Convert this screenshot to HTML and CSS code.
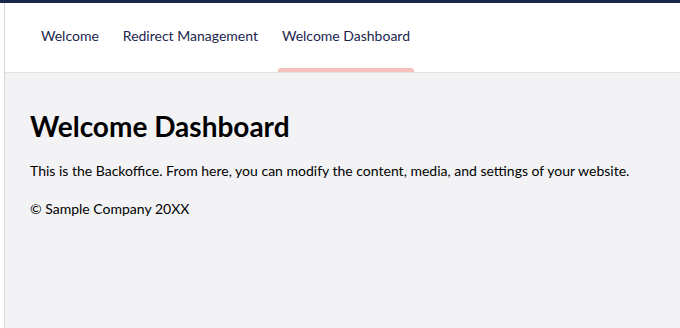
FILE: index.html
```html
<!DOCTYPE html>
<html>
<head>
<meta charset="utf-8">
<link rel="stylesheet" href="styles.css">
</head>
<body>
<div class="topbar"></div>
<div class="shell">
  <div class="sidebar"></div>
  <main class="main">
    <header class="tabs">
      <a class="tab">Welcome</a>
      <a class="tab">Redirect Management</a>
      <a class="tab active">Welcome Dashboard</a>
    </header>
    <section class="content">
      <h1 class="title">Welcome Dashboard</h1>
      <p class="text">This is the Backoffice. From here, you can modify the content, media, and settings of your website.</p>
      <p class="text">© Sample Company 20XX</p>
    </section>
  </main>
</div>
</body>
</html>
```
FILE: styles.css
```css
html, body {
  margin: 0;
  padding: 0;
  height: 100%;
}
body {
  font-family: Lato, "Open Sans", sans-serif;
  color: #000;
  background: #fff;
  display: flex;
  flex-direction: column;
}
.topbar {
  height: 3px;
  background: #1b264f;
  flex: none;
}
.shell {
  flex: 1;
  display: flex;
}
.sidebar {
  width: 4px;
  background: #fff;
  border-right: 1px solid #d8d7d9;
  flex: none;
}
.main {
  flex: 1;
  display: flex;
  flex-direction: column;
  background: #f3f3f5;
}
.tabs {
  height: 65px;
  padding-bottom: 4px;
  background: #fff;
  border-bottom: 1px solid #e3e3e3;
  display: flex;
  padding-left: 24px;
}
.tab {
  position: relative;
  display: flex;
  align-items: center;
  padding: 0 12px;
  font-size: 14px;
  color: #1b264f;
  cursor: pointer;
}
.tab.active::after {
  content: "";
  position: absolute;
  left: 8px;
  right: 8px;
  bottom: -4px;
  height: 4px;
  border-radius: 3px 3px 0 0;
  background: #f5c1bc;
}
.content {
  padding: 35px 25px;
}
.title {
  margin: 0 0 17px;
  font-size: 28px;
  font-weight: 700;
  line-height: 36px;
}
.text {
  margin: 0 0 18px;
  font-size: 14px;
  line-height: 20px;
}
```
